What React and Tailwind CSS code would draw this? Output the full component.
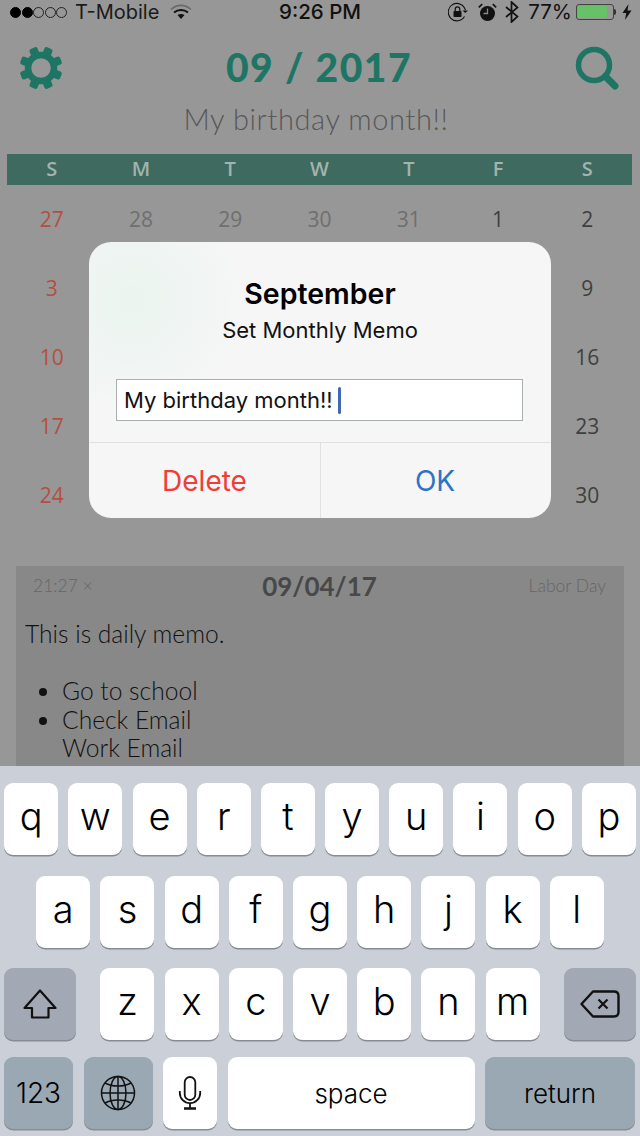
const weeks = [
  [27, 28, 29, 30, 31, 1, 2],
  [3, 4, 5, 6, 7, 8, 9],
  [10, 11, 12, 13, 14, 15, 16],
  [17, 18, 19, 20, 21, 22, 23],
  [24, 25, 26, 27, 28, 29, 30],
];

function GearIcon() {
  return (
    <svg width="46" height="46" viewBox="0 0 46 46" className="text-[#1f7564]">
      <circle cx="23" cy="23" r="13" fill="none" stroke="currentColor" strokeWidth="6.5" />
      {[0, 45, 90, 135, 180, 225, 270, 315].map((deg) => (
        <rect
          key={deg}
          x="18.7"
          y="1.5"
          width="8.6"
          height="9"
          rx="2.2"
          fill="currentColor"
          transform={`rotate(${deg + 22.5} 23 23)`}
        />
      ))}
    </svg>
  );
}

function SearchIcon() {
  return (
    <svg width="46" height="46" viewBox="0 0 46 46" fill="none" stroke="#1f7564" strokeLinecap="round">
      <circle cx="20" cy="20" r="15.5" strokeWidth="5.5" />
      <path d="M31.5 31.5 L41 41" strokeWidth="7" />
    </svg>
  );
}

function SignalDots() {
  return (
    <div className="flex items-center gap-[0.5px]">
      {[1, 1, 0, 0, 0].map((on, i) => (
        <div
          key={i}
          className={on ? "w-[11px] h-[11px] rounded-full bg-black border border-black" : "w-[11px] h-[11px] rounded-full border border-[#222]"}
        />
      ))}
    </div>
  );
}

function WifiIcon() {
  return (
    <svg width="22" height="16" viewBox="0 0 22 16" fill="none">
      <path d="M1 5.5 C7 0 15 0 21 5.5" stroke="#6a6a6a" strokeWidth="1.6" />
      <path d="M4 8.5 C8 5 14 5 18 8.5" stroke="#111" strokeWidth="2" />
      <path d="M7.5 11 C9.5 9.5 12.5 9.5 14.5 11 L11 15 Z" fill="#111" />
    </svg>
  );
}

function RotationLockIcon() {
  return (
    <svg width="20" height="20" viewBox="0 0 20 20" fill="none">
      <path d="M16.5 14.5 A8.7 8.7 0 1 1 17.4 8" stroke="#111" strokeWidth="1.1" />
      <path d="M14.5 8.5 H20 L17.2 11 Z" fill="#111" />
      <rect x="5.5" y="9" width="8" height="6" rx="0.8" fill="#111" />
      <path d="M7.2 9 V7.2 A2.3 2.3 0 0 1 11.8 7.2 V9" stroke="#111" strokeWidth="1.2" />
    </svg>
  );
}

function AlarmIcon() {
  return (
    <svg width="19" height="19" viewBox="0 0 19 19">
      <circle cx="9.5" cy="10.5" r="7.5" fill="#111" />
      <path d="M0.8 4.4 L4.2 1.2 M18.2 4.4 L14.8 1.2" stroke="#111" strokeWidth="1.6" />
      <path d="M9.5 5.5 V10.5 H5.5" fill="none" stroke="#8a8a8a" strokeWidth="1.3" />
    </svg>
  );
}

function BluetoothIcon() {
  return (
    <svg width="14" height="22" viewBox="0 0 14 22" fill="none">
      <path d="M1 6 L12.5 15.5 L6.5 21 V1 L12.5 6.5 L1 16" stroke="#111" strokeWidth="1.7" />
    </svg>
  );
}

function BatteryIcon() {
  return (
    <div className="flex items-center">
      <div className="w-[38px] h-[16px] rounded-[3px] border border-[#444] p-[1px]">
        <div className="w-[29px] h-full bg-[#67c167] rounded-[1px]" />
      </div>
      <div className="w-[2px] h-[6px] bg-[#333] rounded-r-sm" />
    </div>
  );
}

function BoltIcon() {
  return (
    <svg width="10" height="16" viewBox="0 0 10 16">
      <path d="M6.5 0 L0.5 9 H4.2 L3 16 L9.5 6.5 H5.5 Z" fill="#111" />
    </svg>
  );
}

function StatusBar() {
  return (
    <div className="h-[24px] flex items-center justify-between pl-[10px] pr-[8px] text-[#111] text-[20.5px] font-['Inter',sans-serif] relative">
      <div className="flex items-center gap-[8px]">
        <SignalDots />
        <span className="text-[#1a1a1a] text-[20px]">T-Mobile</span>
        <div className="ml-[3px]"><WifiIcon /></div>
      </div>
      <span className="absolute left-0 right-0 text-center font-medium">9:26 PM</span>
      <div className="flex items-center">
        <RotationLockIcon />
        <div className="ml-[10px]"><AlarmIcon /></div>
        <div className="ml-[8px]"><BluetoothIcon /></div>
        <span className="ml-[9px] mr-[4px]">77%</span>
        <BatteryIcon />
        <div className="ml-[6px]"><BoltIcon /></div>
      </div>
    </div>
  );
}

function Calendar() {
  return (
    <div className="font-['Open_Sans',sans-serif]">
      <div className="mt-[16px] ml-[7px] mr-[8px] h-[31px] bg-[#3e6a60] grid grid-cols-7 text-[#a3b3ad] text-[20px] font-semibold">
        {["S", "M", "T", "W", "T", "F", "S"].map((d, i) => (
          <div key={i} className="flex items-center justify-center pb-[2px]">{d}</div>
        ))}
      </div>
      <div className="ml-[7px] mr-[8px]">
        {weeks.map((week, r) => (
          <div key={r} className="h-[69px] grid grid-cols-7 text-[21px]">
            {week.map((day, c) => {
              let color = "text-[#3f3f3f]";
              if (c === 0) color = "text-[#b34f42]";
              else if (r === 0 && c < 5) color = "text-[#6f6f6f]";
              // cells behind the dialog stay empty
              const hidden = r > 0 && c > 0 && c < 6;
              return (
                <div key={c} className={`flex items-center justify-center ${color}`}>
                  {hidden ? "" : day}
                </div>
              );
            })}
          </div>
        ))}
      </div>
    </div>
  );
}

function MemoPanel() {
  return (
    <div className="mt-[36px] mx-[16px] flex-1 min-h-0 overflow-hidden bg-[#888888] font-['Lato',sans-serif] pl-[9px] pr-[9px]">
      <div className="flex items-center justify-between h-[40px] pl-[8px] pr-[9px] text-[#666] text-[17.5px] font-light">
        <span className="w-[120px]">21:27 ×</span>
        <span className="text-[#484848] text-[26px] font-bold">09/04/17</span>
        <span className="w-[120px] text-right">Labor Day</span>
      </div>
      <div className="mt-[14px] text-[#111] text-[24.6px] leading-[28.5px] font-light">
        <p>This is daily memo.</p>
        <ul className="mt-[28.5px] list-disc pl-[37px]">
          <li>Go to school</li>
          <li>Check Email<br />Work Email</li>
        </ul>
      </div>
    </div>
  );
}

function Key({ children, className = "w-[54px] bg-white" }) {
  return (
    <div className={`h-[72px] rounded-[9px] shadow-[0_1.5px_0_#868b94] flex items-center justify-center text-black ${className}`}>
      {children}
    </div>
  );
}

function LetterRow({ letters }) {
  return (
    <div className="flex justify-center gap-[10.2px]">
      {letters.split("").map((l) => (
        <Key key={l}>
          <span className="text-[38px] leading-none font-[350] -mt-[6px]">{l}</span>
        </Key>
      ))}
    </div>
  );
}

function GlobeIcon() {
  return (
    <svg width="36" height="36" viewBox="0 0 36 36" fill="none" stroke="#111" strokeWidth="1.5">
      <circle cx="18" cy="18" r="16.5" />
      <ellipse cx="18" cy="18" rx="8" ry="16.5" />
      <path d="M18 1.5 V34.5 M1.5 18 H34.5" />
      <path d="M5 8 C12 12 24 12 31 8 M5 28 C12 24 24 24 31 28" />
    </svg>
  );
}

function MicIcon() {
  return (
    <svg width="24" height="34" viewBox="0 0 24 34" fill="none" stroke="#111" strokeWidth="1.8">
      <rect x="6.7" y="1" width="10.6" height="23" rx="5.3" />
      <path d="M1.8 15 V17 A10.2 10.2 0 0 0 22.2 17 V15" />
      <path d="M12 27 V32" />
      <path d="M6 32.5 H18" strokeWidth="2.5" />
    </svg>
  );
}

function Keyboard() {
  return (
    <div className="h-[370px] shrink-0 bg-[#cbd0d8] pt-[17px] font-['Inter',sans-serif]">
      <LetterRow letters="qwertyuiop" />
      <div className="mt-[21px]">
        <LetterRow letters="asdfghjkl" />
      </div>
      <div className="mt-[20px] px-[4px] flex justify-between">
        <Key className="w-[72px] bg-[#a2a8b4]">
          <svg width="34" height="30" viewBox="0 0 34 30" fill="none">
            <path d="M17 1.5 L32.5 19 H25.5 V28.5 H9 V19 H1.5 Z" stroke="#111" strokeWidth="2.2" strokeLinejoin="round" />
          </svg>
        </Key>
        <div className="flex gap-[10.2px]">
          {"zxcvbnm".split("").map((l) => (
            <Key key={l}>
              <span className="text-[38px] leading-none font-[350] -mt-[6px]">{l}</span>
            </Key>
          ))}
        </div>
        <Key className="w-[72px] bg-[#a2a8b4]">
          <svg width="40" height="28" viewBox="0 0 40 28" fill="none">
            <path d="M13 1.5 H34 Q38.5 1.5 38.5 6 V22 Q38.5 26.5 34 26.5 H13 L1.5 14 Z" stroke="#111" strokeWidth="2.4" strokeLinejoin="round" />
            <path d="M18.5 9.5 L27.5 18.5 M27.5 9.5 L18.5 18.5" stroke="#111" strokeWidth="2.2" />
          </svg>
        </Key>
      </div>
      <div className="mt-[17px] pl-[4px] flex gap-[10.5px]">
        <Key className="w-[69px] bg-[#9aa8b3]">
          <span className="text-[28px] font-[350]">123</span>
        </Key>
        <Key className="w-[69px] bg-[#9aa8b3]">
          <GlobeIcon />
        </Key>
        <Key>
          <MicIcon />
        </Key>
        <Key className="w-[247px] bg-white">
          <span className="text-[26px] font-[350]">space</span>
        </Key>
        <Key className="w-[150px] bg-[#9aa8b3]">
          <span className="text-[26px] font-[350]">return</span>
        </Key>
      </div>
    </div>
  );
}

function MemoDialog() {
  return (
    <div className="absolute left-[89px] top-[242px] w-[462px] h-[276px] rounded-[22px] overflow-hidden flex flex-col font-['Inter',sans-serif] text-black bg-[#f6f6f7] bg-[radial-gradient(circle_at_42px_58px,#eaf5ef_0px,#eff5f2_50px,#f6f6f7_115px)]">
      <div className="pt-[34px] text-center text-[28.5px] leading-[36px] font-semibold">September</div>
      <div className="mt-[3px] text-center text-[22px] leading-[30px] text-[#111]">Set Monthly Memo</div>
      <div className="mt-[34px] ml-[27px] mr-[28px] h-[42px] bg-white border border-[#a9b0ae] flex items-center pl-[7px] text-[22px] text-[#111]">
        <span className="pt-[1px]">My birthday month!!</span>
        <span className="ml-[5px] w-[3px] h-[27px] bg-[#3f68b8] rounded-full" />
      </div>
      <div className="mt-[21px] flex-1 border-t border-[#e0e1e3] flex text-[28px]">
        <div className="w-[232px] border-r border-[#e0e1e3] flex items-center justify-center text-[#ee3e36] pt-[1px]">Delete</div>
        <div className="flex-1 flex items-center justify-center text-[#2a74c6] pt-[1px] pr-[2px]">OK</div>
      </div>
    </div>
  );
}

export default function App() {
  return (
    <div className="relative w-[640px] h-[1136px] overflow-hidden bg-[#979797] flex flex-col">
      <StatusBar />
      <div className="mt-[12px] h-[64px] pl-[18px] pr-[20px] flex items-center justify-between">
        <GearIcon />
        <div className="text-[#1f7564] text-[39px] font-black tracking-[1.5px] pb-[2px] font-['Lato',sans-serif]">09 / 2017</div>
        <SearchIcon />
      </div>
      <div className="h-[38px] pr-[8px] flex items-center justify-center text-[#585858] text-[29px] font-light tracking-[0.6px] font-['Lato',sans-serif]">
        My birthday month!!
      </div>
      <Calendar />
      <MemoPanel />
      <Keyboard />
      <MemoDialog />
    </div>
  );
}
